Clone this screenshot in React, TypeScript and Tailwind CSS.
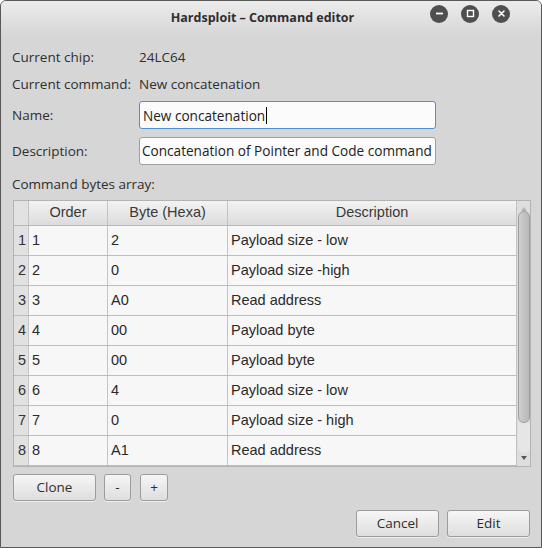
import React from "react";

const rows = [
  ["1", "1", "2", "Payload size - low"],
  ["2", "2", "0", "Payload size -high"],
  ["3", "3", "A0", "Read address"],
  ["4", "4", "00", "Payload byte"],
  ["5", "5", "00", "Payload byte"],
  ["6", "6", "4", "Payload size - low"],
  ["7", "7", "0", "Payload size - high"],
  ["8", "8", "A1", "Read address"],
];

const ui = { fontFamily: '"Open Sans", "DejaVu Sans", sans-serif' };
const tbl = { fontFamily: '"Liberation Sans", Arial, sans-serif' };

function WinBtn({ kind }: { kind: "min" | "max" | "close" }) {
  return (
    <div className="w-[18px] h-[18px] rounded-full bg-[#4f4f4f] flex items-center justify-center">
      <svg width="9" height="9" viewBox="0 0 9 9">
        {kind === "min" && <rect x="1" y="3.6" width="7" height="1.8" fill="#fff" />}
        {kind === "max" && <rect x="1.5" y="1.5" width="6" height="6" fill="none" stroke="#fff" strokeWidth="1.4" />}
        {kind === "close" && (
          <path d="M2 2 L7 7 M7 2 L2 7" stroke="#fff" strokeWidth="1.6" strokeLinecap="round" />
        )}
      </svg>
    </div>
  );
}

function Btn({ children, className }: { children: React.ReactNode; className: string }) {
  return (
    <div
      className={`h-[27px] rounded-[3px] border border-[#9c9c9c] bg-gradient-to-b from-[#f6f6f6] to-[#dedede] flex items-center justify-center text-[13.5px] text-[#2e2e2e] shadow-[0_1px_0_rgba(255,255,255,0.6)] ${className}`}
    >
      {children}
    </div>
  );
}

export default function App() {
  return (
    <div
      className="w-[542px] h-[548px] bg-[#d6d6d6] border border-[#595959] rounded-t-[6px] flex flex-col overflow-hidden text-[#2e2e2e]"
      style={ui}
    >
      {/* Title bar */}
      <div className="h-[35px] shrink-0 bg-gradient-to-b from-[#ececec] to-[#d6d6d6] flex items-center">
        <div className="flex-1" />
        <div className="text-[12.5px] font-bold text-[#2e2e2e] pl-[14px]">Hardsploit – Command editor</div>
        <div className="flex-1 flex justify-end gap-[13px] pr-[31px] pb-[10px]">
          <WinBtn kind="min" />
          <WinBtn kind="max" />
          <WinBtn kind="close" />
        </div>
      </div>

      {/* Content */}
      <div className="flex flex-col pl-[11px] pr-[11px] text-[13.5px]">
        <div className="grid grid-cols-[127px_297px] gap-y-0 mt-[11px]">
          <div className="h-[20px] flex items-center">Current chip:</div>
          <div className="h-[20px] flex items-center">24LC64</div>
          <div className="h-[20px] flex items-center mt-[7px]">Current command:</div>
          <div className="h-[20px] flex items-center mt-[7px]">New concatenation</div>
          <div className="h-[28px] flex items-center mt-[7px]">Name:</div>
          <div className="h-[28px] mt-[7px] rounded-[3px] border border-[#4a90d9] bg-[#fbfbfb] flex items-center px-[3px] text-[13.6px] text-[#222]">
            <span className="border-r border-black pr-[1px] leading-[17px]">New concatenation</span>
          </div>
          <div className="h-[28px] flex items-center mt-[8px]">Description:</div>
          <div className="h-[28px] mt-[8px] rounded-[3px] border border-[#9f9f9f] bg-[#fbfbfb] flex items-center px-[2px] text-[13.6px] text-[#222] overflow-hidden whitespace-nowrap">
            Concatenation of Pointer and Code command
          </div>
        </div>
        <div className="h-[20px] flex items-center mt-[9px]">Command bytes array:</div>

        {/* Table */}
        <div className="mt-[6px] ml-[1px] w-[518px] h-[267px] border border-[#b3b3b3] flex bg-[#f7f7f7]" style={tbl}>
          <div className="flex-1 flex flex-col">
            <div className="h-[25px] shrink-0 flex bg-gradient-to-b from-[#f3f3f3] to-[#dcdcdc] border-b border-[#b8b8b8] text-[14.5px] text-[#3a3a3a]">
              <div className="w-[15px] border-r border-[#c4c4c4] bg-[#e2e2e2]" />
              <div className="w-[79px] border-r border-[#c4c4c4] flex items-center justify-center">Order</div>
              <div className="w-[120px] border-r border-[#c4c4c4] flex items-center justify-center">Byte (Hexa)</div>
              <div className="flex-1 flex items-center justify-center">Description</div>
            </div>
            {rows.map((r) => (
              <div key={r[0]} className="h-[30px] shrink-0 flex border-b border-[#bdbdbd] text-[14.5px] text-[#2a2a2a]">
                <div className="w-[15px] bg-[#e1e1e1] border-r border-[#c4c4c4] flex items-center justify-end pr-[2px] text-[#333]">
                  {r[0]}
                </div>
                <div className="w-[79px] border-r border-[#c4c4c4] flex items-center pl-[3px]">{r[1]}</div>
                <div className="w-[120px] border-r border-[#c4c4c4] flex items-center pl-[3px]">{r[2]}</div>
                <div className="flex-1 flex items-center pl-[3px]">{r[3]}</div>
              </div>
            ))}
          </div>
          {/* Scrollbar */}
          <div className="w-[14px] shrink-0 bg-[#dedede] border-l border-[#c2c2c2] flex flex-col items-center">
            <svg width="8" height="8" viewBox="0 0 8 8" className="mt-[4px]">
              <path d="M1 6 L4 2 L7 6 Z" fill="#b5b5b5" />
            </svg>
            <div className="mt-[-2px] w-[12px] h-[212px] rounded-full border border-[#9e9e9e] bg-gradient-to-r from-[#d0d0d0] via-[#c2c2c2] to-[#b9b9b9]" />
            <div className="w-[12px] h-[30px] rounded-b-full bg-[#e6e6e6]" />
            <div className="flex-1" />
            <svg width="8" height="8" viewBox="0 0 8 8" className="mb-[4px]">
              <path d="M1 2 L7 2 L4 6 Z" fill="#555" />
            </svg>
          </div>
        </div>

        {/* Row buttons */}
        <div className="flex mt-[7px] ml-[1px]">
          <Btn className="w-[83px]">Clone</Btn>
          <Btn className="w-[27px] ml-[8px]">-</Btn>
          <Btn className="w-[28px] ml-[9px]">+</Btn>
        </div>

        {/* Dialog buttons */}
        <div className="flex justify-end mt-[9px]">
          <Btn className="w-[83px]">Cancel</Btn>
          <Btn className="w-[83px] ml-[8px]">Edit</Btn>
        </div>
      </div>
    </div>
  );
}
